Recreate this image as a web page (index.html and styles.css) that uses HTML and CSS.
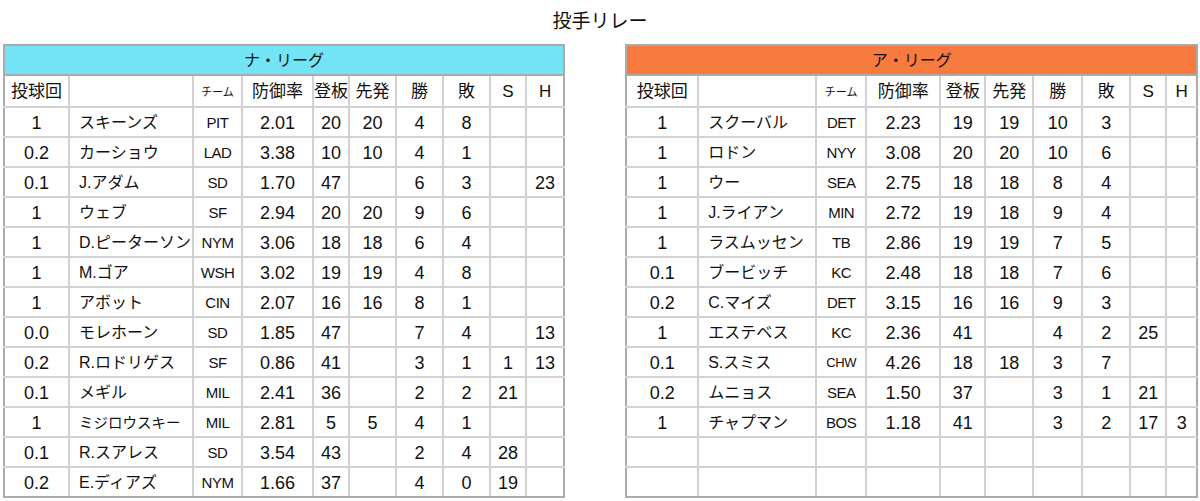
FILE: index.html
```html
<!DOCTYPE html>
<html lang="ja">
<head>
<meta charset="utf-8">
<title>投手リレー</title>
<link rel="stylesheet" href="styles.css">
</head>
<body>
<h1 class="title">投手リレー</h1>
<div class="wrap">
  <table class="league nl">
    <colgroup>
      <col class="w-ip"><col class="w-name"><col class="w-team"><col class="w-era"><col class="w-g"><col class="w-gs"><col class="w-w"><col class="w-l"><col class="w-s"><col class="w-h">
    </colgroup>
    <tr><th class="lg" colspan="10">ナ・リーグ</th></tr>
    <tr class="hd"><td>投球回</td><td></td><td class="tm-h">チーム</td><td>防御率</td><td>登板</td><td>先発</td><td>勝</td><td>敗</td><td>S</td><td>H</td></tr>
    <tr><td>1</td><td class="nm">スキーンズ</td><td class="tm">PIT</td><td>2.01</td><td>20</td><td>20</td><td>4</td><td>8</td><td></td><td></td></tr>
    <tr><td>0.2</td><td class="nm">カーショウ</td><td class="tm">LAD</td><td>3.38</td><td>10</td><td>10</td><td>4</td><td>1</td><td></td><td></td></tr>
    <tr><td>0.1</td><td class="nm">J.アダム</td><td class="tm">SD</td><td>1.70</td><td>47</td><td></td><td>6</td><td>3</td><td></td><td>23</td></tr>
    <tr><td>1</td><td class="nm">ウェブ</td><td class="tm">SF</td><td>2.94</td><td>20</td><td>20</td><td>9</td><td>6</td><td></td><td></td></tr>
    <tr><td>1</td><td class="nm">D.ピーターソン</td><td class="tm">NYM</td><td>3.06</td><td>18</td><td>18</td><td>6</td><td>4</td><td></td><td></td></tr>
    <tr><td>1</td><td class="nm">M.ゴア</td><td class="tm">WSH</td><td>3.02</td><td>19</td><td>19</td><td>4</td><td>8</td><td></td><td></td></tr>
    <tr><td>1</td><td class="nm">アボット</td><td class="tm">CIN</td><td>2.07</td><td>16</td><td>16</td><td>8</td><td>1</td><td></td><td></td></tr>
    <tr><td>0.0</td><td class="nm">モレホーン</td><td class="tm">SD</td><td>1.85</td><td>47</td><td></td><td>7</td><td>4</td><td></td><td>13</td></tr>
    <tr><td>0.2</td><td class="nm">R.ロドリゲス</td><td class="tm">SF</td><td>0.86</td><td>41</td><td></td><td>3</td><td>1</td><td>1</td><td>13</td></tr>
    <tr><td>0.1</td><td class="nm">メギル</td><td class="tm">MIL</td><td>2.41</td><td>36</td><td></td><td>2</td><td>2</td><td>21</td><td></td></tr>
    <tr><td>1</td><td class="nm sm">ミジロウスキー</td><td class="tm">MIL</td><td>2.81</td><td>5</td><td>5</td><td>4</td><td>1</td><td></td><td></td></tr>
    <tr><td>0.1</td><td class="nm">R.スアレス</td><td class="tm">SD</td><td>3.54</td><td>43</td><td></td><td>2</td><td>4</td><td>28</td><td></td></tr>
    <tr><td>0.2</td><td class="nm">E.ディアズ</td><td class="tm">NYM</td><td>1.66</td><td>37</td><td></td><td>4</td><td>0</td><td>19</td><td></td></tr>
  </table>

  <table class="league al">
    <colgroup>
      <col class="w-ip"><col class="w-name"><col class="w-team"><col class="w-era"><col class="w-g"><col class="w-gs"><col class="w-w"><col class="w-l"><col class="w-s"><col class="w-h">
    </colgroup>
    <tr><th class="lg" colspan="10">ア・リーグ</th></tr>
    <tr class="hd"><td>投球回</td><td></td><td class="tm-h">チーム</td><td>防御率</td><td>登板</td><td>先発</td><td>勝</td><td>敗</td><td>S</td><td>H</td></tr>
    <tr><td>1</td><td class="nm">スクーバル</td><td class="tm">DET</td><td>2.23</td><td>19</td><td>19</td><td>10</td><td>3</td><td></td><td></td></tr>
    <tr><td>1</td><td class="nm">ロドン</td><td class="tm">NYY</td><td>3.08</td><td>20</td><td>20</td><td>10</td><td>6</td><td></td><td></td></tr>
    <tr><td>1</td><td class="nm">ウー</td><td class="tm">SEA</td><td>2.75</td><td>18</td><td>18</td><td>8</td><td>4</td><td></td><td></td></tr>
    <tr><td>1</td><td class="nm">J.ライアン</td><td class="tm">MIN</td><td>2.72</td><td>19</td><td>18</td><td>9</td><td>4</td><td></td><td></td></tr>
    <tr><td>1</td><td class="nm">ラスムッセン</td><td class="tm">TB</td><td>2.86</td><td>19</td><td>19</td><td>7</td><td>5</td><td></td><td></td></tr>
    <tr><td>0.1</td><td class="nm">ブービッチ</td><td class="tm">KC</td><td>2.48</td><td>18</td><td>18</td><td>7</td><td>6</td><td></td><td></td></tr>
    <tr><td>0.2</td><td class="nm">C.マイズ</td><td class="tm">DET</td><td>3.15</td><td>16</td><td>16</td><td>9</td><td>3</td><td></td><td></td></tr>
    <tr><td>1</td><td class="nm">エステベス</td><td class="tm">KC</td><td>2.36</td><td>41</td><td></td><td>4</td><td>2</td><td>25</td><td></td></tr>
    <tr><td>0.1</td><td class="nm">S.スミス</td><td class="tm tm-xs">CHW</td><td>4.26</td><td>18</td><td>18</td><td>3</td><td>7</td><td></td><td></td></tr>
    <tr><td>0.2</td><td class="nm">ムニョス</td><td class="tm">SEA</td><td>1.50</td><td>37</td><td></td><td>3</td><td>1</td><td>21</td><td></td></tr>
    <tr><td>1</td><td class="nm">チャプマン</td><td class="tm">BOS</td><td>1.18</td><td>41</td><td></td><td>3</td><td>2</td><td>17</td><td>3</td></tr>
    <tr><td></td><td></td><td></td><td></td><td></td><td></td><td></td><td></td><td></td><td></td></tr>
    <tr><td></td><td></td><td></td><td></td><td></td><td></td><td></td><td></td><td></td><td></td></tr>
  </table>
</div>
</body>
</html>
```

FILE: styles.css
```css
html, body {
  margin: 0;
  padding: 0;
  background: #fff;
}
body {
  font-family: "Liberation Sans", "Noto Sans CJK JP", sans-serif;
  color: #111;
}
.title {
  margin: 0;
  height: 44px;
  line-height: 44px;
  text-align: center;
  font-size: 19px;
  font-weight: normal;
}
.wrap {
  display: flex;
  gap: 60px;
  padding-left: 3px;
}
.league {
  border-collapse: collapse;
  table-layout: fixed;
}
.nl { width: 560px; }
.al { width: 571px; }

.league th,
.league td {
  border: 2px solid #d2d2d2;
  padding: 2px 0 0;
  text-align: center;
  font-size: 18px;
  font-weight: normal;
  height: 26px;
  line-height: 26px;
  white-space: nowrap;
  overflow: hidden;
}
.league tr td:first-child { border-left-color: #ababab; }
.league tr td:last-child { border-right-color: #ababab; }
.league tr:last-child td { border-bottom-color: #ababab; }
.league th.lg {
  border-color: #ababab;
  height: 25px;
  font-size: 16px;
}
.nl th.lg { background: #72e4f6; }
.al th.lg { background: #f77a3f; }

.league tr.hd td { height: 28px; font-size: 17px; }
.league tr.hd td.tm-h { font-size: 11px; }

.league td.nm {
  text-align: left;
  padding-left: 9px;
  font-size: 16px;
}
.league td.nm.sm { font-size: 14.5px; }
.league td.tm { font-size: 15px; letter-spacing: -0.5px; }
.league td.tm-xs { font-size: 13px; }

.nl .w-ip { width: 65px; }
.nl .w-name { width: 124px; }
.nl .w-team { width: 49px; }
.nl .w-era { width: 71px; }
.nl .w-g { width: 36px; }
.nl .w-gs { width: 47px; }
.nl .w-w { width: 47px; }
.nl .w-l { width: 47px; }
.nl .w-s { width: 36px; }
.nl .w-h { width: 38px; }

.al .w-ip { width: 72px; }
.al .w-name { width: 118px; }
.al .w-team { width: 50px; }
.al .w-era { width: 74px; }
.al .w-g { width: 45px; }
.al .w-gs { width: 48px; }
.al .w-w { width: 49px; }
.al .w-l { width: 48px; }
.al .w-s { width: 36px; }
.al .w-h { width: 31px; }
```
